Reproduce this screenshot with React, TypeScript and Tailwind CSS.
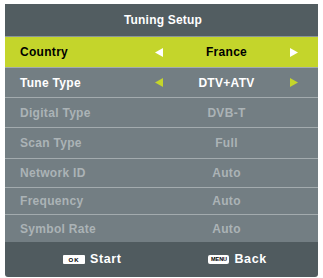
import React from "react";

const font = { fontFamily: '"Liberation Sans", Arial, sans-serif' };

function LeftTri({ color }: { color: string }) {
  return (
    <svg width="8" height="9" viewBox="0 0 8 9">
      <polygon points="8,0 8,9 0,4.5" fill={color} />
    </svg>
  );
}
function RightTri({ color }: { color: string }) {
  return (
    <svg width="8" height="9" viewBox="0 0 8 9">
      <polygon points="0,0 0,9 8,4.5" fill={color} />
    </svg>
  );
}

type Row = { label: string; value: string; kind: "active" | "dis"; h: string };

const rows: Row[] = [
  { label: "Tune Type", value: "DTV+ATV", kind: "active", h: "h-[29px]" },
  { label: "Digital Type", value: "DVB-T", kind: "dis", h: "h-[29px]" },
  { label: "Scan Type", value: "Full", kind: "dis", h: "h-[30px]" },
  { label: "Network ID", value: "Auto", kind: "dis", h: "h-[28px]" },
  { label: "Frequency", value: "Auto", kind: "dis", h: "h-[26px]" },
  { label: "Symbol Rate", value: "Auto", kind: "dis", h: "h-[27px]" },
];

export default function App() {
  return (
    <div className="w-[323px] h-[278px] bg-white pt-[4px] pl-[5px]" style={font}>
      <div className="w-[313px] flex flex-col rounded-b-[3px] overflow-hidden">
        <div className="h-[32px] bg-[#525d61] flex items-center justify-center text-white font-bold text-[12px] tracking-[0.2px] pl-[3px]">
          Tuning Setup
        </div>
        <div className="h-[1px] bg-[#8a9598]" />
        <div className="h-[30px] bg-[#c4d52b] flex items-center text-black font-bold text-[12px] tracking-[0.3px]">
          <div className="pl-[15px] w-[150px]">Country</div>
          <LeftTri color="#ffffff" />
          <div className="w-[127px] text-center">France</div>
          <RightTri color="#ffffff" />
        </div>
        {rows.map((r) => (
          <div key={r.label} className="flex flex-col">
            <div className="h-[1px] bg-[#a3abae]" />
            <div
              className={
                r.h +
                " bg-[#737e83] flex items-center font-bold text-[12px] tracking-[0.3px] " +
                (r.kind === "active" ? "text-white" : "text-[#abb3b6]")
              }
            >
              <div className="pl-[15px] w-[150px]">{r.label}</div>
              {r.kind === "active" ? <LeftTri color="#c4d52b" /> : <div className="w-[8px]" />}
              <div className="w-[127px] text-center">{r.value}</div>
              {r.kind === "active" ? <RightTri color="#c4d52b" /> : <div className="w-[8px]" />}
            </div>
          </div>
        ))}
        <div className="h-[35px] bg-[#505b5f] flex items-center text-white font-bold text-[12.5px] tracking-[0.6px]">
          <div className="flex items-center ml-[58px]">
            <div className="w-[22px] h-[9px] bg-white rounded-[1px] flex items-center justify-center text-black text-[6px] tracking-[1px] font-bold leading-none">
              OK
            </div>
            <div className="ml-[5px]">Start</div>
          </div>
          <div className="flex items-center ml-[87px]">
            <div className="w-[21px] h-[9px] bg-white rounded-[2px] flex items-center justify-center text-black text-[5.5px] tracking-[0px] font-bold leading-none">
              MENU
            </div>
            <div className="ml-[5px]">Back</div>
          </div>
        </div>
      </div>
    </div>
  );
}
